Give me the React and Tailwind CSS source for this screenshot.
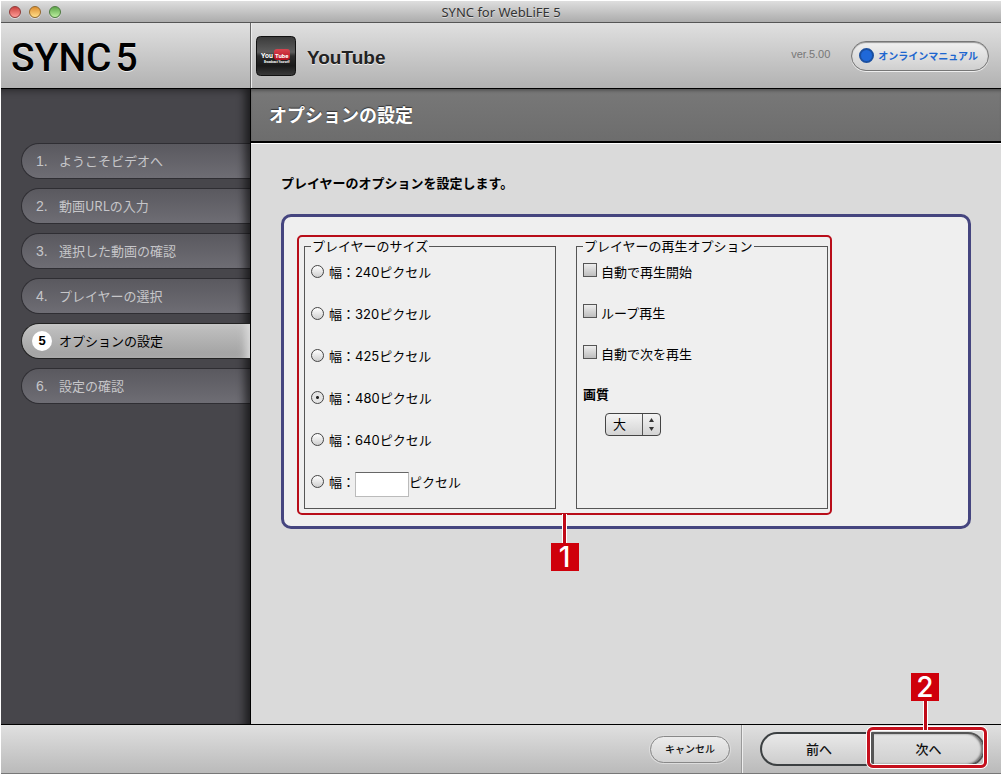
const steps = [
  "ようこそビデオへ",
  "動画URLの入力",
  "選択した動画の確認",
  "プレイヤーの選択",
  "オプションの設定",
  "設定の確認",
]
const currentStep = 4

const widths = [240, 320, 425, 480, 640]

const playbackOptions = ["自動で再生開始", "ループ再生", "自動で次を再生"]

const trafficLights = [
  { label: "閉じる", color: "from-[#c9403f] to-[#ff9c98] border-[#8f3a38]" },
  { label: "しまう", color: "from-[#dd8f2c] to-[#ffe08a] border-[#94692c]" },
  { label: "拡大", color: "from-[#5da64a] to-[#bdf0a0] border-[#4d7a40]" },
]

function TitleBar() {
  return (
    <div className="relative flex h-[23px] items-center justify-center border-t border-b border-t-white border-b-[#555] bg-gradient-to-b from-[#dedede] to-[#acacac]">
      <div className="absolute left-2 flex gap-2">
        {trafficLights.map((t) => (
          <button
            key={t.label}
            aria-label={t.label}
            className={`size-3 rounded-full border bg-gradient-to-b shadow-[0_1px_0_#ddd] ${t.color}`}
          />
        ))}
      </div>
      <span className="font-['Noto_Sans',sans-serif] text-[13px] leading-5 text-[#333] [text-shadow:0_1px_0_#ddd]">
        SYNC for WebLiFE 5
      </span>
    </div>
  )
}

function YouTubeIcon() {
  return (
    <svg viewBox="0 0 40 40" className="size-10" role="img" aria-label="YouTube">
      <defs>
        <linearGradient id="tile" x1="0" y1="0" x2="0" y2="1">
          <stop offset="0" stopColor="#3a3a3a" />
          <stop offset="0.4" stopColor="#5c5c5c" />
          <stop offset="0.5" stopColor="#2c2c2c" />
          <stop offset="0.75" stopColor="#1a1a1a" />
          <stop offset="1" stopColor="#3b3b3b" />
        </linearGradient>
        <linearGradient id="tube" x1="0" y1="0" x2="0" y2="1">
          <stop offset="0" stopColor="#d8434f" />
          <stop offset="1" stopColor="#b30f20" />
        </linearGradient>
      </defs>
      <rect x="0.5" y="0.5" width="39" height="39" rx="4" fill="url(#tile)" stroke="#111" />
      <rect x="18" y="13" width="16" height="11" rx="3" fill="url(#tube)" />
      <g fill="#fff" fontWeight="700" fontFamily="'Roboto', sans-serif">
        <text x="5" y="22" fontSize="7">You</text>
        <text x="19" y="22" fontSize="6">Tube</text>
        <text x="8" y="27" fontSize="3">Broadcast Yourself</text>
      </g>
    </svg>
  )
}

function Header() {
  return (
    <header className="flex h-[66px] border-b border-black bg-gradient-to-b from-[#e0e0e0] to-[#b2b2b2]">
      <div className="flex w-[250px] shrink-0 items-center border-r border-[#666] pt-1 pl-[10px]">
        <span className="flex gap-1 font-['Roboto',sans-serif] text-[39px] leading-10 font-medium text-black [text-shadow:0_1px_0_#eee]">
          <span>SYNC</span>
          <span>5</span>
        </span>
      </div>
      <div className="flex flex-1 items-center border-l border-[#eee] pr-3 pl-1">
        <YouTubeIcon />
        <h1 className="ml-[11px] pt-1 font-['Liberation_Sans',sans-serif] text-[19px] leading-6 font-bold text-[#222] [text-shadow:0_1px_0_#eee]">
          YouTube
        </h1>
        <span className="ml-auto pb-1 font-['Liberation_Sans',sans-serif] text-[11px] leading-4 text-[#777]">ver.5.00</span>
        <a
          href="#"
          className="ml-[21px] flex h-[30px] items-center gap-1 rounded-full border border-[#777] bg-gradient-to-b from-[#f1f1f1] to-[#cfcfcf] pr-[10px] pl-[7px] text-[10px] leading-4 font-bold text-[#1d66cf] shadow-[0_1px_0_#eee] inset-shadow-[0_1px_1px_#999]"
        >
          <span className="size-[15px] rounded-full border-2 border-[#1b4f9f] bg-[#1f68d8]" />
          オンラインマニュアル
        </a>
      </div>
    </header>
  )
}

function Sidebar() {
  return (
    <nav className="relative w-[250px] shrink-0 border-r border-black bg-[#47464b] pt-[54px] pl-5">
      <ol className="flex flex-col gap-[9px]">
        {steps.map((step, i) => (
          <li key={step}>
            {i === currentStep ? (
              <a
                href="#"
                aria-current="step"
                className="relative z-10 flex h-9 items-center rounded-l-full border border-r-0 border-[#222] bg-gradient-to-b from-[#c2c2c2] to-[#a0a0a0] pl-[10px] text-[13px] leading-5 text-black inset-shadow-[-8px_0_8px_-4px_#ddd]"
              >
                <span className="mr-[7px] flex size-5 items-center justify-center rounded-full bg-white font-['Liberation_Sans',sans-serif] font-bold">
                  {i + 1}
                </span>
                {step}
              </a>
            ) : (
              <a
                href="#"
                className="flex h-9 items-center rounded-l-full border border-r-0 border-[#2f2e33] bg-gradient-to-b from-[#5a595f] to-[#6e6d74] pl-[14px] text-[13px] leading-5 text-[#c6c6c9]"
              >
                <span className="w-[23px] font-['Liberation_Sans',sans-serif] text-[14px]">{i + 1}.</span>
                {step}
              </a>
            )}
          </li>
        ))}
      </ol>
      <div className="pointer-events-none absolute inset-0 inset-shadow-[-8px_3px_8px_-3px_rgba(0,0,0,0.6)]" />
    </nav>
  )
}

const radioClass =
  "mb-0.5 size-[13px] appearance-none rounded-full border border-[#444] bg-gradient-to-b from-white to-[#cfcfcf] checked:bg-[radial-gradient(circle,#222_0_1px,#e4e4e4_2px)]"

const fieldsetClass = "w-[252px] border border-[#555] px-1.5 pb-2.5"

function SizeFieldset() {
  return (
    <fieldset className={fieldsetClass}>
      <legend className="px-px leading-5">プレイヤーのサイズ</legend>
      <div className="flex flex-col gap-2.5">
        {widths.map((w) => (
          <label key={w} className="flex h-8 items-center gap-[5px]">
            <input type="radio" name="width" defaultChecked={w === 480} className={radioClass} />
            <span>幅：{w}ピクセル</span>
          </label>
        ))}
        <div className="flex h-8 items-center">
          <label className="flex items-center gap-[5px]">
            <input type="radio" name="width" className={radioClass} />
            <span>幅：</span>
          </label>
          <input
            type="text"
            aria-label="幅（ピクセル）"
            className="mt-1 h-[25px] w-[54px] border border-[#bbb] border-t-[#666] bg-white px-1"
          />
          <span>ピクセル</span>
        </div>
      </div>
    </fieldset>
  )
}

function PlaybackFieldset() {
  return (
    <fieldset className={fieldsetClass}>
      <legend className="px-px leading-5">プレイヤーの再生オプション</legend>
      <div className="flex flex-col gap-[9px]">
        {playbackOptions.map((option) => (
          <label key={option} className="flex h-8 items-center gap-1">
            <input
              type="checkbox"
              className="mb-1 size-[14px] appearance-none border border-[#555] bg-gradient-to-b from-[#eee] to-[#bdbdbd] checked:bg-[#666]"
            />
            <span>{option}</span>
          </label>
        ))}
        <label htmlFor="quality" className="flex h-8 items-center pb-0.5 font-bold">
          画質
        </label>
      </div>
      <div className="relative mt-0.5 ml-[22px] w-14">
        <select
          id="quality"
          className="block h-[23px] w-full appearance-none rounded-[4px] border border-[#444] bg-gradient-to-b from-[#f4f4f4] to-[#d4d4d4] pb-0.5 pl-[7px] text-[13px] leading-5"
        >
          <option>大</option>
          <option>中</option>
          <option>小</option>
        </select>
        <svg viewBox="0 0 19 23" className="pointer-events-none absolute top-0 right-0 h-[23px] w-[19px]">
          <path d="M0.5 1V22" stroke="#555" />
          <path d="M7 9L9.5 5L12 9ZM7 14L9.5 18L12 14Z" fill="#333" />
        </svg>
      </div>
    </fieldset>
  )
}

function Badge({ children }) {
  return (
    <span className="flex size-7 items-center justify-center bg-[#cf000b] font-['Inter','Liberation_Sans',sans-serif] text-[28px] leading-7 font-medium text-white">
      {children}
    </span>
  )
}

function Connector() {
  return <span className="h-[29px] w-[5px] border-x border-white bg-[#c00a18]" />
}

function Main() {
  return (
    <main className="flex-1 bg-[#dadada]">
      <div className="flex h-[54px] items-center border-b-2 border-black bg-gradient-to-b from-[#787878] to-[#6d6d6d] px-[18px] pb-0.5 inset-shadow-[0_3px_3px_-1px_#555]">
        <h2 className="text-[18px] leading-6 font-bold text-white [text-shadow:0_-1px_1px_#333]">オプションの設定</h2>
      </div>
      <div className="border-t border-white px-[30px] pt-[29px] text-[13px] leading-5 text-black">
        <p className="font-bold">プレイヤーのオプションを設定します。</p>
        <div className="mt-[21px] rounded-[10px] border-3 border-[#45457f] bg-[#efefef] px-5 pt-[19px] pb-[17px]">
          <div className="relative flex w-fit gap-5 font-['Inter','Noto_Sans_CJK_JP',sans-serif]">
            <SizeFieldset />
            <PlaybackFieldset />
            <div className="pointer-events-none absolute -top-px -right-1 -bottom-1.5 -left-[7px] rounded-[5px] border-2 border-[#b80d19]">
              <div className="absolute inset-x-0 top-full flex flex-col items-center pt-px">
                <Connector />
                <Badge>1</Badge>
              </div>
            </div>
          </div>
        </div>
      </div>
    </main>
  )
}

function Footer() {
  return (
    <footer className="flex h-[50px] items-center justify-end border-t border-b border-t-black border-b-[#777] bg-gradient-to-b from-[#e0e0e0] to-[#bababa] pr-4 text-[13px] leading-5 text-[#111]">
      <button className="mr-[11px] h-[27px] w-20 rounded-full border border-[#888] bg-gradient-to-b from-[#ececec] to-[#d2d2d2] text-[10px] font-medium shadow-[0_0_0_1px_#ddd]">
        キャンセル
      </button>
      <div className="mr-[17px] h-full border-r border-l border-l-[#999] border-r-[#eee]" />
      <button className="h-[34px] w-[110px] rounded-l-full border-2 border-r-0 border-[#3c4042] bg-gradient-to-b from-[#e9e9e9] to-[#cdcdcd] pl-1.5 font-medium">
        前へ
      </button>
      <div className="relative">
        <button className="block h-[34px] w-[115px] rounded-r-full border-2 border-l-4 border-[#555] bg-gradient-to-b from-[#e4e4e4] to-[#d0d0d0] font-medium inset-shadow-[-2px_0_2px_#777]">
          次へ
        </button>
        <div className="pointer-events-none absolute -top-[5px] -right-0.5 -bottom-0.5 -left-[3px] rounded-[6px] border-3 border-[#c5101d] shadow-[0_0_0_1px_#fff] inset-shadow-[0_0_0_1px_#fff]">
          <div className="absolute inset-x-0 bottom-full flex flex-col items-center pr-1">
            <Badge>2</Badge>
            <Connector />
          </div>
        </div>
      </div>
    </footer>
  )
}

export default function App() {
  return (
    <div className="flex min-h-screen flex-col border-l border-white bg-[#dadada] font-['Noto_Sans_CJK_JP',sans-serif]">
      <TitleBar />
      <Header />
      <div className="flex flex-1">
        <Sidebar />
        <Main />
      </div>
      <Footer />
    </div>
  )
}
